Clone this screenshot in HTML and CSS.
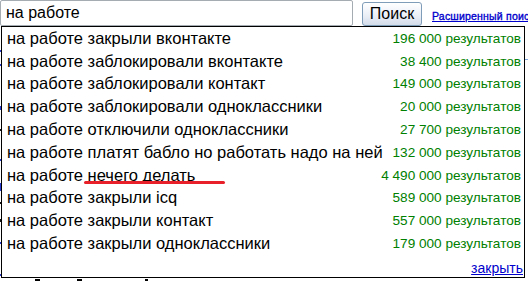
FILE: index.html
```html
<!DOCTYPE html>
<html lang="ru">
  <head>
    <meta charset="UTF-8" />
    <title>на работе</title>
    <link rel="stylesheet" href="styles.css">
  </head>
  <body>
    <div class="page">
      <div class="search-bar">
        <div class="query">на работе</div>
        <button class="btn">Поиск</button>
        <a href="#" class="advanced">Расширенный поиск</a>
      </div>

      <div class="suggest">
        <div class="row"><span>на работе закрыли вконтакте</span><span class="count">196 000 результатов</span></div>
        <div class="row"><span>на работе заблокировали вконтакте</span><span class="count">38 400 результатов</span></div>
        <div class="row"><span>на работе заблокировали контакт</span><span class="count">149 000 результатов</span></div>
        <div class="row"><span>на работе заблокировали одноклассники</span><span class="count">20 000 результатов</span></div>
        <div class="row"><span>на работе отключили одноклассники</span><span class="count">27 700 результатов</span></div>
        <div class="row"><span>на работе платят бабло но работать надо на ней</span><span class="count">132 000 результатов</span></div>
        <div class="row"><span>на работе нечего делать</span><span class="count">4 490 000 результатов</span></div>
        <div class="row"><span>на работе закрыли icq</span><span class="count">589 000 результатов</span></div>
        <div class="row"><span>на работе закрыли контакт</span><span class="count">557 000 результатов</span></div>
        <div class="row"><span>на работе закрыли одноклассники</span><span class="count">179 000 результатов</span></div>
        <div class="footer"><a href="#">закрыть</a></div>
      </div>

      <!-- bits of the page underneath peeking out around the dropdown -->
      <span class="peek blue" style="top: 50px; height: 2px"></span>
      <span class="peek blue" style="top: 64px; height: 2px"></span>
      <span class="peek blue" style="top: 106px; height: 4px"></span>
      <span class="peek dark" style="top: 129px; height: 2px"></span>
      <span class="peek blue" style="top: 159px; height: 2px"></span>
      <span class="peek blue" style="top: 183px; height: 8px"></span>
      <span class="peek dark" style="top: 202px; height: 2px"></span>
      <span class="peek dark" style="top: 219px; height: 3px"></span>
      <span class="peek blue" style="top: 242px; height: 2px"></span>
      <span class="peek blue" style="top: 274px; height: 2px"></span>
      <span class="peek-bottom" style="left: 35px; width: 5px"></span>
      <span class="peek-bottom" style="left: 77px; width: 5px"></span>
      <span class="peek-bottom" style="left: 145px; width: 3px"></span>
      <span class="peek-right"></span>

      <!-- red marker line under "нечего делать" -->
      <div class="marker"></div>
    </div>
  </body>
</html>
```

FILE: styles.css
```css
body {
  margin: 0;
  overflow: hidden;
  background: #fff;
  font-family: "Liberation Sans", Arial, sans-serif;
  color: #000;
}

.page {
  position: relative;
  width: 528px;
  height: 281px;
  overflow: hidden;
}

.search-bar {
  display: flex;
  align-items: flex-start;
  white-space: nowrap;
}

.query {
  flex-shrink: 0;
  box-sizing: border-box;
  width: 353px;
  height: 26px;
  padding: 2px 5px;
  border: 1px solid #a5acb2;
  border-radius: 2px;
  font-size: 16px;
  line-height: 20px;
}

.btn {
  flex-shrink: 0;
  box-sizing: border-box;
  margin: 2px 0 0 9px;
  width: 60px;
  height: 24px;
  padding: 0;
  border: 1px solid #7f9db9;
  border-radius: 3px;
  background: linear-gradient(#ffffff, #e9eef6 60%, #d3dcea);
  font-family: "Liberation Sans", Arial, sans-serif;
  font-size: 16px;
  color: #000;
}

.advanced {
  flex-shrink: 0;
  margin: 10px 0 0 10px;
  font-size: 10.5px;
  letter-spacing: 0.2px;
  -webkit-text-stroke: 0.35px #0000cc;
  color: #0000cc;
}

.suggest {
  box-sizing: border-box;
  width: 524px;
  margin-left: 1px;
  border: 1px solid #000;
  background: #fff;
  font-size: 16.5px;
}

.row {
  display: flex;
  justify-content: space-between;
  align-items: center;
  height: 22.8px;
  padding: 0 3px 0 5px;
  white-space: nowrap;
}

.count {
  font-size: 13.6px;
  color: #008000;
}

.footer {
  height: 22px;
  padding: 0 1px 0 0;
  text-align: right;
  font-size: 14px;
  line-height: 26px;
}

.footer a {
  color: #0000cc;
}

.peek {
  position: absolute;
  left: 0;
  width: 1px;
}

.peek.blue {
  background: #2b3bd0;
}

.peek.dark {
  background: #111;
}

.peek-bottom {
  position: absolute;
  top: 279px;
  height: 2px;
  background: #000;
}

.peek-right {
  position: absolute;
  left: 525px;
  top: 59px;
  width: 3px;
  height: 1px;
  background: #7fa7e0;
}

.marker {
  position: absolute;
  left: 84px;
  top: 181px;
  width: 141px;
  height: 3px;
  border-radius: 2px;
  background: #e8202a;
}
```
